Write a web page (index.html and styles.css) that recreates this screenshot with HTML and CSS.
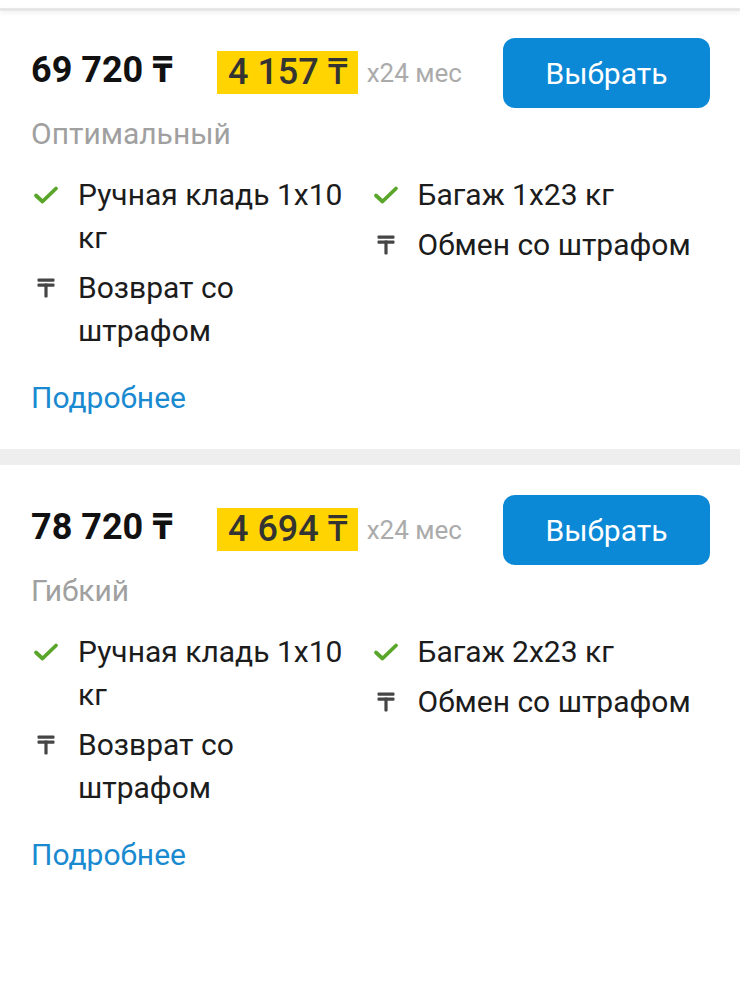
FILE: index.html
```html
<!doctype html>
<html lang="ru">
<head>
    <meta charset="UTF-8">
    <title>Тарифы</title>
    <link rel="stylesheet" href="styles.css">
</head>
<body>
<div class="top-line"></div>

<div class="tariff">
    <div class="tariff-head">
        <div class="price">69 720 ₸</div>
        <div class="monthly">4 157 ₸</div>
        <div class="months">x24 мес</div>
        <a class="choose-btn" href="javascript:void(0);">Выбрать</a>
    </div>
    <div class="tariff-name">Оптимальный</div>
    <div class="features">
        <div class="feature-col">
            <div class="feature">
                <svg class="icon" viewBox="0 0 26 20"><path d="M3 10.5l6.5 6L23 3.5" fill="none" stroke="#5aa62b" stroke-width="3.8" stroke-linecap="round" stroke-linejoin="round"/></svg>
                <span>Ручная кладь 1x10 кг</span>
            </div>
            <div class="feature">
                <svg class="icon" viewBox="0 0 26 20"><rect x="4.5" y="0.5" width="17" height="3.2" rx="1" fill="#454545"/><rect x="4.5" y="5.6" width="17" height="3.2" rx="1" fill="#454545"/><rect x="11.4" y="5.6" width="3.2" height="14" rx="1" fill="#454545"/></svg>
                <span>Возврат со штрафом</span>
            </div>
        </div>
        <div class="feature-col">
            <div class="feature">
                <svg class="icon" viewBox="0 0 26 20"><path d="M3 10.5l6.5 6L23 3.5" fill="none" stroke="#5aa62b" stroke-width="3.8" stroke-linecap="round" stroke-linejoin="round"/></svg>
                <span>Багаж 1x23 кг</span>
            </div>
            <div class="feature">
                <svg class="icon" viewBox="0 0 26 20"><rect x="4.5" y="0.5" width="17" height="3.2" rx="1" fill="#454545"/><rect x="4.5" y="5.6" width="17" height="3.2" rx="1" fill="#454545"/><rect x="11.4" y="5.6" width="3.2" height="14" rx="1" fill="#454545"/></svg>
                <span>Обмен со штрафом</span>
            </div>
        </div>
    </div>
    <a class="more" href="javascript:void(0);">Подробнее</a>
</div>

<div class="separator"></div>

<div class="tariff">
    <div class="tariff-head">
        <div class="price">78 720 ₸</div>
        <div class="monthly">4 694 ₸</div>
        <div class="months">x24 мес</div>
        <a class="choose-btn" href="javascript:void(0);">Выбрать</a>
    </div>
    <div class="tariff-name">Гибкий</div>
    <div class="features">
        <div class="feature-col">
            <div class="feature">
                <svg class="icon" viewBox="0 0 26 20"><path d="M3 10.5l6.5 6L23 3.5" fill="none" stroke="#5aa62b" stroke-width="3.8" stroke-linecap="round" stroke-linejoin="round"/></svg>
                <span>Ручная кладь 1x10 кг</span>
            </div>
            <div class="feature">
                <svg class="icon" viewBox="0 0 26 20"><rect x="4.5" y="0.5" width="17" height="3.2" rx="1" fill="#454545"/><rect x="4.5" y="5.6" width="17" height="3.2" rx="1" fill="#454545"/><rect x="11.4" y="5.6" width="3.2" height="14" rx="1" fill="#454545"/></svg>
                <span>Возврат со штрафом</span>
            </div>
        </div>
        <div class="feature-col">
            <div class="feature">
                <svg class="icon" viewBox="0 0 26 20"><path d="M3 10.5l6.5 6L23 3.5" fill="none" stroke="#5aa62b" stroke-width="3.8" stroke-linecap="round" stroke-linejoin="round"/></svg>
                <span>Багаж 2x23 кг</span>
            </div>
            <div class="feature">
                <svg class="icon" viewBox="0 0 26 20"><rect x="4.5" y="0.5" width="17" height="3.2" rx="1" fill="#454545"/><rect x="4.5" y="5.6" width="17" height="3.2" rx="1" fill="#454545"/><rect x="11.4" y="5.6" width="3.2" height="14" rx="1" fill="#454545"/></svg>
                <span>Обмен со штрафом</span>
            </div>
        </div>
    </div>
    <a class="more" href="javascript:void(0);">Подробнее</a>
</div>
</body>
</html>
```

FILE: styles.css
```css
* {
    margin: 0;
    padding: 0;
    box-sizing: border-box;
}

body {
    background-color: #fff;
    font-family: Roboto, "Noto Sans", sans-serif;
    color: #1c1c1c;
}

.top-line {
    margin-top: 8px;
    height: 3px;
    background-color: #e6e6e6;
    box-shadow: 0 2px 4px rgba(0, 0, 0, .07);
}

.tariff {
    padding: 30px 30px 30px 31px;
}

.top-line + .tariff {
    padding-top: 27px;
}

.tariff-head {
    display: flex;
    align-items: center;
    height: 70px;
}

.price {
    font-size: 36px;
    font-weight: 700;
    color: #111;
    width: 186px;
    margin-top: -9px;
    white-space: nowrap;
}

.monthly {
    background-color: #ffd400;
    color: #333;
    font-size: 36px;
    font-weight: 500;
    height: 43px;
    line-height: 43px;
    padding: 0 10px 0 11px;
    margin-top: -2px;
    white-space: nowrap;
}

.months {
    font-size: 26px;
    color: #ababab;
    margin-left: 9px;
    white-space: nowrap;
}

.choose-btn {
    margin-left: auto;
    width: 207px;
    height: 70px;
    border-radius: 12px;
    background-color: #0b89d6;
    color: #fff;
    font-size: 30px;
    text-decoration: none;
    display: flex;
    align-items: center;
    justify-content: center;
}

.tariff-name {
    margin-top: 5px;
    font-size: 30px;
    line-height: 42px;
    color: #a0a0a0;
}

.features {
    display: flex;
    margin-top: 18px;
}

.feature-col {
    width: 340px;
    display: flex;
    flex-direction: column;
    gap: 7px;
}

.feature {
    display: flex;
    align-items: flex-start;
    font-size: 30px;
    line-height: 43px;
    color: #1c1c1c;
}

.feature span {
    flex: 1;
}

.icon {
    width: 26px;
    height: 20px;
    margin: 12px 19px 0 2px;
    flex-shrink: 0;
}

.more {
    display: block;
    margin-top: 24px;
    font-size: 30px;
    line-height: 43px;
    color: #1a8ad0;
    text-decoration: none;
}

.separator {
    height: 16px;
    background-color: #eeeeee;
}
```
